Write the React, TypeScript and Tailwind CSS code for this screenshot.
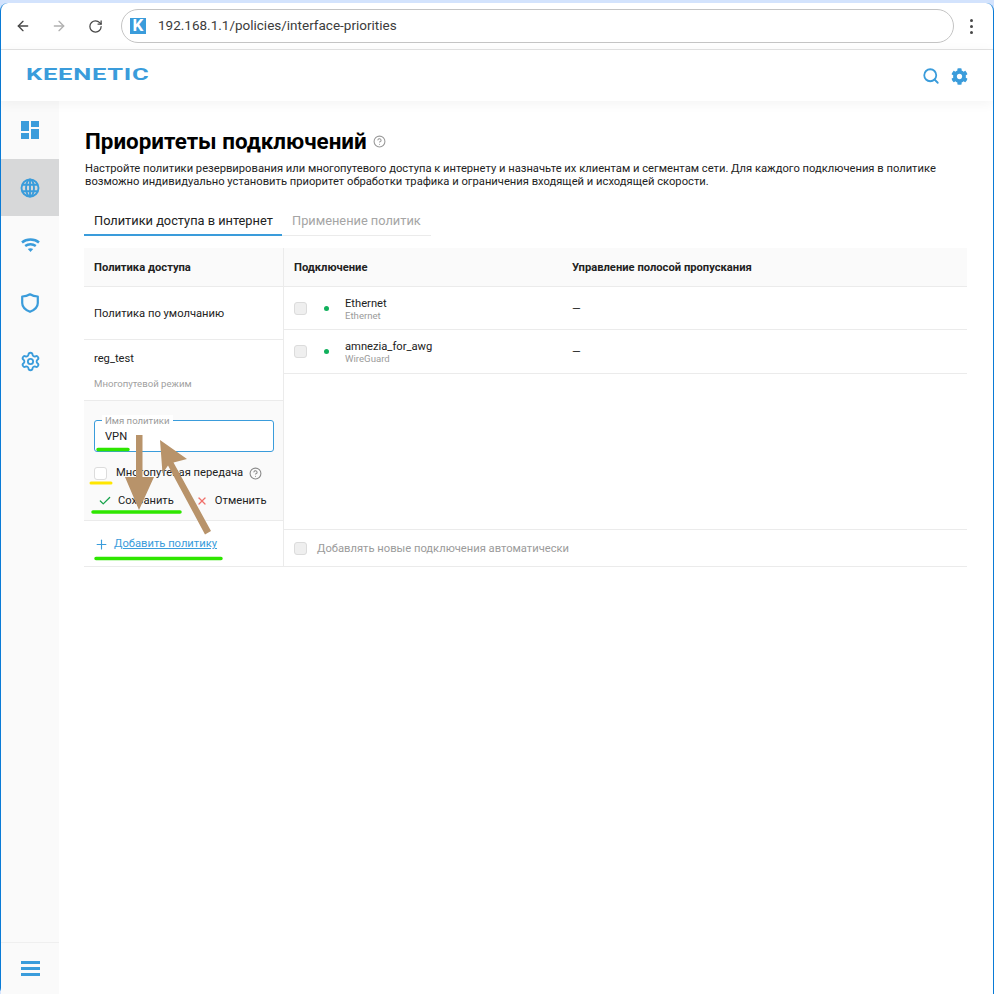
import { ArrowLeft, ArrowRight, RotateCw, Search, Check, X, Plus, CircleHelp, Settings } from 'lucide-react';
import { FaCog } from 'react-icons/fa';

const font = { fontFamily: 'Roboto, sans-serif' };

const Dashboard = () => (
  <svg width="18" height="18" viewBox="0 0 18 18" fill="#3a9cdb">
    <rect x="0" y="0" width="8" height="10" />
    <rect x="10" y="0" width="8" height="6" />
    <rect x="0" y="12" width="8" height="6" />
    <rect x="10" y="8" width="8" height="10" />
  </svg>
);

const GlobeIcon = () => (
  <svg width="20" height="20" viewBox="0 0 20 20" fill="none" stroke="#3a9cdb" strokeWidth="1.900">
    <circle cx="10" cy="10" r="8.500" />
    <ellipse cx="10" cy="10" rx="4" ry="8.500" />
    <path d="M10 1.500V18.500M2.500 6.800H17.500M2.500 13.200H17.500" />
  </svg>
);

const Wifi = () => (
  <svg width="19" height="16" viewBox="0 0 19 16" fill="none" stroke="#3a9cdb" strokeWidth="2.400">
    <path d="M1 5.500 C5.500 1.500 13.500 1.500 18 5.500" />
    <path d="M4.200 9 C7.200 6.600 11.800 6.600 14.800 9" />
    <path d="M9.500 15 L6.800 12 C8.400 10.900 10.600 10.900 12.200 12 Z" fill="#3a9cdb" stroke="none" />
  </svg>
);

const ShieldIcon = () => (
  <svg width="18" height="20" viewBox="0 0 18 20" fill="none" stroke="#3a9cdb" strokeWidth="2.200" strokeLinejoin="round">
    <path d="M9 1.300 C11.500 2.800 14 3.400 16.800 3.500 V10 C16.800 14 13.500 17 9 18.800 C4.500 17 1.200 14 1.200 10 V3.500 C4 3.400 6.500 2.800 9 1.300 Z" />
  </svg>
);

const Box = () => <div className="w-[13px] h-[13px] rounded-[3px] border border-[#dcdcdc] bg-[#efefef]" />;

const Conn = ({ name, type, h, textTop }: { name: string; type: string; h: string; textTop: string }) => (
  <div className={`flex items-center border-b border-[#ebebeb] ${h}`}>
    <div className="ml-[10px] w-[30px]"><Box /></div>
    <div className="w-[5px] h-[5px] rounded-full bg-[#11b05c]" />
    <div className={`ml-[16px] w-[227px] ${textTop}`}>
      <div className="text-[11.200px] leading-[13px] text-[#222]">{name}</div>
      <div className="text-[9.600px] leading-[11px] text-[#9b9b9b]">{type}</div>
    </div>
    <div className="mt-[2px] text-[11.200px] text-[#222]">—</div>
  </div>
);

export default function App() {
  return (
    <div style={font} className="relative w-[994px] h-[994px] overflow-hidden bg-[#d3e3fd] pt-[3px]">
      <div className="flex flex-col h-[991px] bg-white border-l border-r border-[#0a7bd6] rounded-t-[8px] rounded-bl-[6px]">
        {/* browser bar */}
        <div className="flex items-center h-[47px] border-b border-[#e3e3e3] shrink-0">
          <ArrowLeft className="ml-[14px] w-[16px] h-[16px] text-[#474747]" />
          <ArrowRight className="ml-[20px] w-[16px] h-[16px] text-[#b0b0b0]" />
          <RotateCw className="ml-[21px] w-[15px] h-[15px] text-[#474747]" />
          <div className="ml-[18px] mb-[1px] flex items-center w-[833px] h-[34px] rounded-full border border-[#c4c4c4] pl-[8px]">
            <div className="flex items-center justify-center w-[16px] h-[16px] bg-[#3a9cdb] text-white text-[17px] font-bold leading-none">K</div>
            <span className="ml-[12px] text-[13.500px] text-[#3c3c3c]">192.168.1.1/policies/interface-priorities</span>
          </div>
          <div className="ml-[16px] flex flex-col gap-[3px]">
            <div className="w-[3px] h-[3px] rounded-full bg-[#474747]" />
            <div className="w-[3px] h-[3px] rounded-full bg-[#474747]" />
            <div className="w-[3px] h-[3px] rounded-full bg-[#474747]" />
          </div>
        </div>
        {/* app header */}
        <div className="flex items-center justify-between h-[51px] shrink-0 pl-[25px] pr-[25px] shadow-[0_2px_12px_rgba(0,0,0,0.05)] z-10 bg-white">
          <span className="mb-[2px] text-[17px] font-bold tracking-[0.5px] text-[#3a9cdb] scale-x-[1.5] origin-left">KEENETIC</span>
          <div className="flex items-center gap-[11px] mt-[1px]">
            <Search className="w-[18px] h-[18px] text-[#3a9cdb]" strokeWidth={2.400} />
            <FaCog className="w-[17px] h-[17px] text-[#3a9cdb]" />
          </div>
        </div>
        <div className="flex flex-1 min-h-0">
          {/* sidebar */}
          <div className="flex flex-col w-[58px] shrink-0 bg-[#fafafa]">
            <div className="flex items-center justify-center h-[58px]"><Dashboard /></div>
            <div className="flex items-center justify-center h-[57px] bg-[#d7d8d9]"><GlobeIcon /></div>
            <div className="flex items-center justify-center h-[58px]"><Wifi /></div>
            <div className="flex items-center justify-center h-[58px]"><ShieldIcon /></div>
            <div className="flex items-center justify-center h-[58px]"><Settings className="w-[21px] h-[21px] text-[#3a9cdb]" strokeWidth={2.100} /></div>
            <div className="mt-auto flex flex-col items-center justify-center gap-[3px] h-[52px] border-t border-[#efefef]">
              <div className="w-[19px] h-[3px] bg-[#3a9cdb]" />
              <div className="w-[19px] h-[3px] bg-[#3a9cdb]" />
              <div className="w-[19px] h-[3px] bg-[#3a9cdb]" />
            </div>
          </div>
          {/* content */}
          <div className="flex-1 pl-[25px] pr-[26px] pt-[26px] text-[#111]">
            <div className="flex items-center gap-[6px] h-[28px] pl-[1px]">
              <h1 className="text-[22.400px] font-bold leading-[28px] text-black">Приоритеты подключений</h1>
              <CircleHelp className="w-[13px] h-[13px] text-[#9a9a9a]" />
            </div>
            <p className="mt-[7px] pl-[1px] text-[11.200px] leading-[13px] text-[#222]">
              Настройте политики резервирования или многопутевого доступа к интернету и назначьте их клиентам и сегментам сети. Для каждого подключения в политике возможно индивидуально установить приоритет обработки трафика и ограничения входящей и исходящей скорости.
            </p>
            <div className="mt-[19px] flex w-[347px] h-[29px] border-b border-[#ebebeb]">
              <div className="flex items-center w-[198px] h-[29px] pl-[10px] border-b-2 border-[#3a9cdb] text-[12.800px] text-[#222]">Политики доступа в интернет</div>
              <div className="flex items-center pl-[10px] h-[28px] text-[12.800px] text-[#a5a5a5]">Применение политик</div>
            </div>
            {/* table */}
            <div className="mt-[12px] flex">
              <div className="w-[200px] border-r border-[#ebebeb]">
                <div className="flex items-center h-[39px] pl-[10px] pt-[2px] bg-[#fafafa] border-b border-[#ebebeb] text-[11.200px] font-bold text-[#222]">Политика доступа</div>
                <div className="flex items-center h-[53px] pl-[10px] pt-[2px] border-b border-[#ebebeb] text-[11.200px] text-[#222]">Политика по умолчанию</div>
                <div className="h-[61px] pl-[10px] pt-[12px] border-b border-[#ebebeb]">
                  <div className="text-[11.200px] leading-[14px] text-[#222]">reg_test</div>
                  <div className="mt-[12px] text-[9.600px] leading-[12px] text-[#a0a0a0]">Многопутевой режим</div>
                </div>
                <div className="h-[120px] bg-[#fafafa] border-b border-[#ebebeb] pl-[10px] pr-[9px] pt-[19px]">
                  <div className="relative h-[32px] rounded-[3px] border border-[#3a9cdb] bg-white flex items-center pl-[10px] pt-[2px] text-[11.200px] text-[#222]">
                    <span className="absolute -top-[6px] left-[7px] px-[3px] bg-white text-[9.600px] leading-[11px] text-[#9a9a9a]">Имя политики</span>
                    VPN
                  </div>
                  <div className="mt-[13px] flex items-center">
                    <div className="w-[13px] h-[13px] rounded-[3px] border border-[#dcdcdc] bg-white" />
                    <span className="ml-[9px] text-[11.200px] text-[#222]">Многопутевая передача</span>
                    <CircleHelp className="ml-[6px] w-[13px] h-[13px] text-[#8a8a8a]" />
                  </div>
                  <div className="mt-[11px] flex items-center text-[11.200px] text-[#222]">
                    <Check className="ml-[4px] w-[14px] h-[14px] text-[#16a34a]" strokeWidth={2.200} />
                    <span className="ml-[6px]">Сохранить</span>
                    <X className="ml-[22px] w-[12px] h-[12px] text-[#f0706a]" strokeWidth={2.500} />
                    <span className="ml-[7px]">Отменить</span>
                  </div>
                </div>
                <div className="flex items-center h-[46px] pl-[10px] pt-[2px] border-b border-[#ebebeb] text-[11.200px]">
                  <Plus className="w-[15px] h-[15px] text-[#3a9cdb]" strokeWidth={1.800} />
                  <span className="ml-[5px] text-[#3a9cdb] underline">Добавить политику</span>
                </div>
              </div>
              <div className="flex-1 flex flex-col">
                <div className="flex items-center h-[39px] pt-[2px] bg-[#fafafa] border-b border-[#ebebeb] text-[11.200px] font-bold text-[#222]">
                  <span className="ml-[10px] w-[278px]">Подключение</span>
                  <span>Управление полосой пропускания</span>
                </div>
                <Conn name="Ethernet" type="Ethernet" h="h-[43px]" textTop="mt-[2px]" />
                <Conn name="amnezia_for_awg" type="WireGuard" h="h-[44px]" textTop="mt-0" />
                <div className="flex-1" />
                <div className="flex items-center h-[38px] border-t border-b border-[#ebebeb] pl-[10px] pt-[1px]">
                  <Box />
                  <span className="ml-[10px] mt-[2px] text-[11.200px] text-[#9b9b9b]">Добавлять новые подключения автоматически</span>
                </div>
              </div>
            </div>
          </div>
        </div>
      </div>
      {/* annotations drawn on top of the screenshot */}
      <svg className="absolute left-0 top-0 pointer-events-none" width="994" height="994" viewBox="0 0 994 994" fill="none">
        <path d="M98 449.500H128M93 512H180M96 558.500H221" stroke="#2ee600" strokeWidth="3.500" strokeLinecap="round" />
        <path d="M91 483H111" stroke="#ffe600" strokeWidth="3" strokeLinecap="round" />
        <path d="M136 435h6.500v42H154l-15 33-14-33h11z" fill="#b8936a" />
        <path d="M160 440l27 19-13.500 3.500L211 531l-6 3.500-37-69-5.500 8z" fill="#b8936a" />
      </svg>
    </div>
  );
}
